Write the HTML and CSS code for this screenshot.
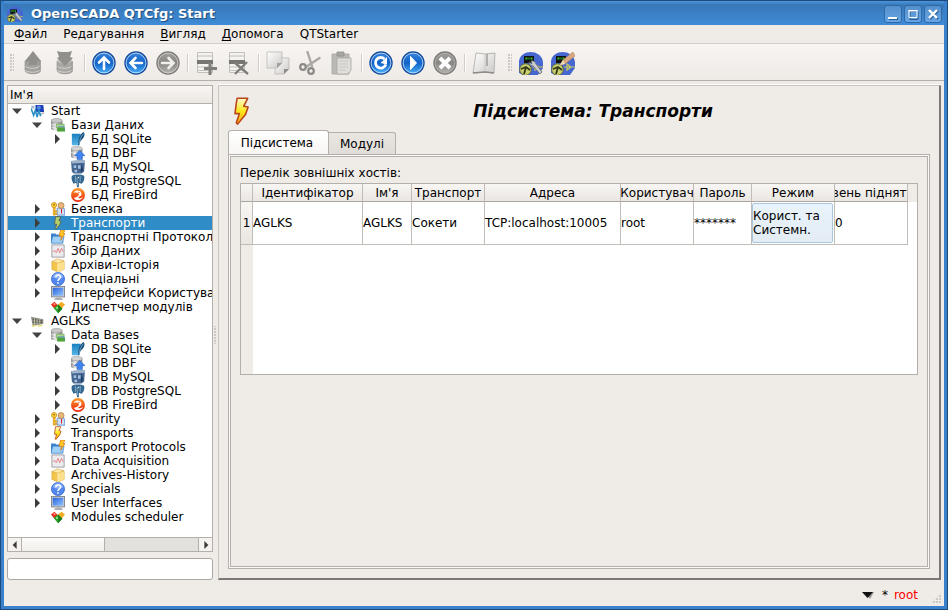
FILE: index.html
```html
<!DOCTYPE html>
<html lang="uk">
<head>
    <meta charset="UTF-8">
    <meta name="viewport" content="width=device-width, initial-scale=1.0">
    <title>OpenSCADA QTCfg: Start</title>
    <link rel="stylesheet" href="styles.css">
</head>
<body>
    <!-- icon set -->
    <svg class="defs" aria-hidden="true">
        <defs>
            <linearGradient id="gBlue" x1="0" y1="0" x2="0" y2="1"><stop offset="0" stop-color="#3d86dc"/><stop offset=".5" stop-color="#0f62c8"/><stop offset="1" stop-color="#4fb4fb"/></linearGradient>
            <linearGradient id="gGray" x1="0" y1="0" x2="0" y2="1"><stop offset="0" stop-color="#a3a19e"/><stop offset=".5" stop-color="#898784"/><stop offset="1" stop-color="#b8b6b3"/></linearGradient>
            <linearGradient id="gDb" x1="0" y1="0" x2="1" y2="0"><stop offset="0" stop-color="#8b8b8b"/><stop offset=".35" stop-color="#e8e8e8"/><stop offset="1" stop-color="#808080"/></linearGradient>
            <linearGradient id="gPage" x1="0" y1="0" x2="1" y2="1"><stop offset="0" stop-color="#ffffff"/><stop offset="1" stop-color="#cccac7"/></linearGradient>
            <linearGradient id="gBolt" x1="0" y1="0" x2="0" y2="1"><stop offset="0" stop-color="#fffbd0"/><stop offset=".5" stop-color="#ffe818"/><stop offset="1" stop-color="#f8a010"/></linearGradient>
            <linearGradient id="gSky" x1="0" y1="0" x2="1" y2="1"><stop offset="0" stop-color="#2c62dc"/><stop offset="1" stop-color="#8fc4ff"/></linearGradient>
            <linearGradient id="gSqlite" x1="0" y1="0" x2="0" y2="1"><stop offset="0" stop-color="#1a7fc0"/><stop offset="1" stop-color="#58b4e4"/></linearGradient>
            <linearGradient id="gFire" x1="0" y1="0" x2="0" y2="1"><stop offset="0" stop-color="#ff9a2a"/><stop offset="1" stop-color="#e8220c"/></linearGradient>
        </defs>

        <symbol id="t-load" viewBox="0 0 24 24">
            <path d="M6 9v11c0 4 14 4 14 0V9z" fill="#b3b1ae"/>
            <path d="M4 10v9c0 5 15 5 15 0v-9z" fill="#a3a19e" stroke="#8d8b88" stroke-width=".6"/>
            <path d="M4.500 15c1 3 13 3 14 0M4.500 19c1 3 13 3 14 0" fill="none" stroke="#d4d2cf" stroke-width="1"/>
            <path d="M12 0l8 10h-4v4H8v-4H4z" fill="#92908d"/>
        </symbol>
        <symbol id="t-save" viewBox="0 0 24 24">
            <path d="M6 10v10c0 4 14 4 14 0V10z" fill="#b3b1ae"/>
            <path d="M4 10v9c0 5 15 5 15 0v-9z" fill="#a9a7a4" stroke="#8d8b88" stroke-width=".6"/>
            <ellipse cx="11.500" cy="10" rx="7.500" ry="2.500" fill="#c4c2bf"/>
            <path d="M4.500 15c1 3 13 3 14 0M4.500 19c1 3 13 3 14 0" fill="none" stroke="#d4d2cf" stroke-width="1"/>
            <path d="M4 0l4 1h7l4-1-2 6 3 1-8 8-8-8 2-1z" fill="#92908d"/>
        </symbol>
        <symbol id="t-up" viewBox="0 0 24 24">
            <circle cx="12" cy="12" r="11" fill="url(#gBlue)" stroke="#134a9c" stroke-width="1.400"/><circle cx="12" cy="12" r="9.900" fill="none" stroke="#cfe5fb" stroke-width=".8"/>
            <path d="M12 18V7M7 11.500l5-5 5 5" fill="none" stroke="#fff" stroke-width="2.600" stroke-linecap="round"/>
        </symbol>
        <symbol id="t-back" viewBox="0 0 24 24">
            <circle cx="12" cy="12" r="11" fill="url(#gBlue)" stroke="#134a9c" stroke-width="1.400"/><circle cx="12" cy="12" r="9.900" fill="none" stroke="#cfe5fb" stroke-width=".8"/>
            <path d="M18 12H7M11.500 7l-5 5 5 5" fill="none" stroke="#fff" stroke-width="2.600" stroke-linecap="round"/>
        </symbol>
        <symbol id="t-forward" viewBox="0 0 24 24">
            <circle cx="12" cy="12" r="11" fill="url(#gGray)" stroke="#7d7b78" stroke-width="1.400"/><circle cx="12" cy="12" r="9.900" fill="none" stroke="#d4d2cf" stroke-width=".8"/>
            <path d="M6 12h11M12.500 7l5 5-5 5" fill="none" stroke="#f1efec" stroke-width="2.600" stroke-linecap="round"/>
        </symbol>
        <symbol id="t-add" viewBox="0 0 24 24">
            <path d="M2.500 1.500h15v20h-15z" fill="#f5f3f0" stroke="#c2c0bd"/>
            <path d="M3 5h14M3 16h14M3 19.500h14" stroke="#c2c0bd"/>
            <path d="M2 9h16v4H2z" fill="#777572"/>
            <path d="M15 11v13M9 17.500h13" stroke="#807e7b" stroke-width="3"/>
        </symbol>
        <symbol id="t-del" viewBox="0 0 24 24">
            <path d="M2.500 1.500h15v20h-15z" fill="#f5f3f0" stroke="#c2c0bd"/>
            <path d="M3 5h14M3 16h14M3 19.500h14" stroke="#c2c0bd"/>
            <path d="M2 9h16v4H2z" fill="#777572"/>
            <path d="M7 11l14 12M20 11L8 23" stroke="#807e7b" stroke-width="2.400"/>
        </symbol>
        <symbol id="t-copy" viewBox="0 0 24 24">
            <path d="M9 7h14v11l-5 5H9z" fill="url(#gPage)" stroke="#b9b7b4" stroke-width=".8"/><path d="M23 18h-5v5z" fill="#8f8d8a"/>
            <path d="M1 1h15v11l-5 5H1z" fill="url(#gPage)" stroke="#b9b7b4" stroke-width=".8"/><path d="M16 12h-5v5z" fill="#a19f9c"/>
        </symbol>
        <symbol id="t-cut" viewBox="0 0 24 24">
            <path d="M9.500 1l4.500 14M21.500 7L8 16" stroke="#aaa8a5" stroke-width="2.400" stroke-linecap="round"/>
            <circle cx="5" cy="16" r="2.800" fill="none" stroke="#8b8986" stroke-width="2.200"/>
            <circle cx="13" cy="20" r="2.800" fill="none" stroke="#8b8986" stroke-width="2.200"/>
        </symbol>
        <symbol id="t-paste" viewBox="0 0 24 24">
            <path d="M2 3h17v20H2z" fill="#bbb9b6" stroke="#a5a3a0" stroke-width=".8"/><path d="M7 1h7v4H7z" fill="#a9a7a4" stroke="#8f8d8a" stroke-width=".8"/>
            <path d="M7 7h14v12l-3 4H7z" fill="#e0deda" stroke="#a5a3a0" stroke-width=".8"/><path d="M9 10h9M9 13h9M9 16h9M9 19h6" stroke="#c8c6c3"/>
        </symbol>
        <symbol id="t-refresh" viewBox="0 0 24 24">
            <circle cx="12" cy="12" r="11" fill="url(#gBlue)" stroke="#134a9c" stroke-width="1.400"/><circle cx="12" cy="12" r="9.900" fill="none" stroke="#cfe5fb" stroke-width=".8"/>
            <path d="M15.500 8a5.300 5.300 0 1 0 1.300 5.500" fill="none" stroke="#fff" stroke-width="2.800"/><path d="M11.500 12l6.500-6v7.500z" fill="#fff"/>
        </symbol>
        <symbol id="t-start" viewBox="0 0 24 24">
            <circle cx="12" cy="12" r="11" fill="url(#gBlue)" stroke="#134a9c" stroke-width="1.400"/><circle cx="12" cy="12" r="9.900" fill="none" stroke="#cfe5fb" stroke-width=".8"/>
            <path d="M9.500 5.500l6 6.500-6 6.500z" fill="#fff" stroke="#fff" stroke-linejoin="round"/>
        </symbol>
        <symbol id="t-stop" viewBox="0 0 24 24">
            <circle cx="12" cy="12" r="11" fill="url(#gGray)" stroke="#7d7b78" stroke-width="1.400"/><circle cx="12" cy="12" r="9.900" fill="none" stroke="#b4b2af" stroke-width=".8"/>
            <path d="M7 7l10 10M17 7L7 17" stroke="#fff" stroke-width="4"/>
        </symbol>
        <symbol id="t-manual" viewBox="0 0 24 24">
            <path d="M4 2l9 1 10-1-1 20-9-1-12 1z" fill="url(#gPage)" stroke="#a9a7a4" stroke-width=".8"/>
            <path d="M13 3v18" stroke="#c8c6c3"/><path d="M15 3v12" stroke="#8d8b88" stroke-width="1.200"/><path d="M1 22l12-1 9 1" fill="none" stroke="#8d8b88" stroke-width="1.400"/>
        </symbol>
        <symbol id="t-scada" viewBox="0 0 24 24">
            <path d="M0 22V10C2-2 22-2 24 11v6l-5 7H4z" fill="#4667d2"/>
            <path d="M5 5h10v7H5z" fill="#111"/><path d="M6.500 7.500h2m1 0h1m1 0h2" stroke="#2cc52c" stroke-width="2"/>
            <path d="M13 16h11M16 13v6l4-3z" stroke="#c8c860" stroke-width="1.200" fill="none"/>
            <circle cx="6.500" cy="18.500" r="5.800" fill="#c8cf6c" stroke="#5f6630"/><path d="M2 18l5-2 4 3M7 16l-2 7" stroke="#333a18" stroke-width="1.800" fill="none"/>
        </symbol>
        <symbol id="t-cfg" viewBox="0 0 24 24">
            <use href="#t-scada"/>
            <path d="M12 10a4 4 0 0 1 5 3l6 8-2 2-7-8a4 4 0 0 1-4-4l3 2z" fill="#c9cdd2" stroke="#5d636b" stroke-width=".8"/>
        </symbol>
        <symbol id="t-vision" viewBox="0 0 24 24">
            <use href="#t-scada"/>
            <path d="M9 14l3-5L22 1l2 4-10 8z" fill="#d9a880" stroke="#b08460" stroke-width=".6"/><path d="M9 14l3-5 2 4z" fill="#f0dcb8"/>
        </symbol>

        <symbol id="i-start" viewBox="0 0 16 16">
            <path d="M5 1h9l1 8H6z" fill="#1b3fb4"/><path d="M7 2h4v4H7z" fill="#5f86e8"/><path d="M9 11l6-2v2l-5 2z" fill="#b9b9c8"/>
            <path d="M0 5l3 8 2-6 2 8 2-8 2 7" fill="none" stroke="#2a8fc4" stroke-width="1.800"/><path d="M0 2h4v3H1z" fill="#a8b4d4"/>
        </symbol>
        <symbol id="i-aglks" viewBox="0 0 16 16">
            <path d="M0 3l14 3v5L2 14z" fill="#8d8d82"/><path d="M2 6l11 2M2 9l11 1" stroke="#55554c" stroke-width="1.200"/><path d="M4 5v7M7 6v6M10 6v5" stroke="#c8c8b8"/>
            <path d="M1 14l5-1M8 14l5-1" stroke="#e8e070" stroke-width="1.600"/>
        </symbol>
        <symbol id="i-db" viewBox="0 0 16 16">
            <path d="M0 3v9c0 3 13 3 13 0V3z" fill="url(#gDb)"/><ellipse cx="6.500" cy="3" rx="6.500" ry="2.500" fill="#c8c8c8" stroke="#888" stroke-width=".6"/>
            <path d="M0 7c2 2 11 2 13 0M0 10c2 2 11 2 13 0" fill="none" stroke="#f4f4f4" stroke-width=".7"/>
            <path d="M6 7h9v4H6z" fill="#a8d890" stroke="#5c9040" stroke-width=".6"/><path d="M7 11h9v4.500H7z" fill="#4fa438"/><path d="M8 10h7v3" stroke="#5f8fd0" fill="none"/>
        </symbol>
        <symbol id="i-sqlite" viewBox="0 0 16 16">
            <path d="M1 2h10l-1 13H1z" fill="url(#gSqlite)"/><path d="M8 15c0-7 2-12 6-15 3 2 1 7-3 10l-2 5z" fill="#17507a"/><path d="M9 14c1-5 2-8 5-12" stroke="#9fd3ee" fill="none" stroke-width=".7"/>
        </symbol>
        <symbol id="i-dbf" viewBox="0 0 16 16">
            <path d="M0 3v9c0 3 13 3 13 0V3z" fill="url(#gDb)"/><ellipse cx="6.500" cy="3" rx="6.500" ry="2.500" fill="#d4d4d4" stroke="#888" stroke-width=".6"/>
            <path d="M0 7c2 2 11 2 13 0" fill="none" stroke="#fff" stroke-width=".7"/><path d="M10 5l6 6h-3v4.500H7V11H4z" fill="#3f84f0" stroke="#1d54b8" stroke-width=".6"/>
        </symbol>
        <symbol id="i-mysql" viewBox="0 0 16 16">
            <path d="M0 1l16-1-1 13-3 2.500H3L1 13z" fill="#44658f"/><path d="M0 1l16-1v3L1 4z" fill="#9db4cc"/>
            <path d="M3 6h3v3H3zm5 0h3v4H8zm-4 5h3v3H4z" fill="#a4c0e0"/><path d="M12 4l2 8-3 2z" fill="#203c68"/>
        </symbol>
        <symbol id="i-pgsql" viewBox="0 0 16 16">
            <path d="M1 2c3-2 11-2 14 0 1 4-1 8-3 9l-3-1v5H7l-1-5-3 1C1 8 0 5 1 2z" fill="#34678f"/>
            <path d="M5 2v7M10.500 2v7M7 4c0 3 0 5 .500 9" stroke="#a4c4dc" stroke-width=".8" fill="none"/><circle cx="8.500" cy="4" r=".8" fill="#fff"/>
        </symbol>
        <symbol id="i-fire" viewBox="0 0 16 16">
            <circle cx="8" cy="8" r="8" fill="url(#gFire)"/><path d="M3 5c4-4 9-2 9 2 0 2-3 3-4 4 2 1 4 1 6-1-2 5-9 5-11 1 3 0 6-2 6-4S6 5 3 5z" fill="#fff"/><circle cx="9" cy="5" r=".8" fill="#f06010"/>
        </symbol>
        <symbol id="i-sec" viewBox="0 0 16 16">
            <path d="M7 7h8l1 8H7z" fill="#cfe0fa" stroke="#3f74c8" stroke-width=".8"/><path d="M12 8v5" stroke="#d82020" stroke-width="1.200"/><circle cx="11.500" cy="4" r="3.400" fill="#e8b878" stroke="#a87848" stroke-width=".8"/>
            <circle cx="3.500" cy="3.500" r="3" fill="#ffd23c" stroke="#c08818" stroke-width=".8"/><circle cx="3.500" cy="3" r="1" fill="#a06c08"/><path d="M2.500 6.500h2.300V15H2.500zM5 10h2v1.500H5zm0 3h2v1.500H5z" fill="#f8b820" stroke="#c08818" stroke-width=".5"/>
        </symbol>
        <symbol id="i-bolt" viewBox="0 0 32 32">
            <path d="M10.500 1.500h12L18 10.500l5 1L20 20 11 31l-1.500-1.500L13 19H8L9.500 7z" fill="url(#gBolt)" stroke="#b84418" stroke-width="1.800" stroke-linejoin="round"/>
        </symbol>
        <symbol id="i-boltsel" viewBox="0 0 32 32">
            <path d="M10.500 1.500h12L18 10.500l5 1L20 20 11 31l-1.500-1.500L13 19H8L9.500 7z" fill="#b4cf68" stroke="#565c58" stroke-width="2" stroke-linejoin="round"/>
        </symbol>
        <symbol id="i-proto" viewBox="0 0 16 16">
            <path d="M0 4h5l1 1h8v10H0z" fill="#3d84cc"/><path d="M2 7h13l-2 8H0z" fill="#9fd0f8" stroke="#2f74bc" stroke-width=".6"/><path d="M11 0h5l-2 4h2l-5 8 1-5h-3z" fill="#ffc820" stroke="#d06810" stroke-width=".7"/>
        </symbol>
        <symbol id="i-daq" viewBox="0 0 16 16">
            <path d="M1 1h14v14H1z" fill="#ecebf0" stroke="#97979c"/><path d="M2 9l2-2 2 3 2-5 2 5 2-5 2 4" fill="none" stroke="#e07070" stroke-width=".9"/>
        </symbol>
        <symbol id="i-arch" viewBox="0 0 16 16">
            <path d="M1 4v9l7 3 7-3V4z" fill="#f4c64c" stroke="#d8a440" stroke-width=".7"/><path d="M1 4l6-3 8 2-7 3z" fill="#ffe9a4" stroke="#d8a440" stroke-width=".7"/><path d="M8 6v10l7-3V4z" fill="#fbe08c"/><path d="M8 6v10" stroke="#fff4c8"/>
        </symbol>
        <symbol id="i-spec" viewBox="0 0 16 16">
            <circle cx="8" cy="8" r="7.500" fill="#5487ee" stroke="#2f62d0" stroke-width=".8"/><path d="M2 6c1-6 11-6 12 0-4 2-8 2-12 0z" fill="#8fb4fa"/>
            <path d="M5.500 6c0-3.500 5.300-3.500 5.300-.3C10.800 8 8 7.800 8 10.200M8 11.600v1.800" fill="none" stroke="#fff" stroke-width="1.800"/>
        </symbol>
        <symbol id="i-ui" viewBox="0 0 16 16">
            <path d="M0 0h16v13H0z" fill="#7f8388"/><path d="M1 1h14v11H1z" fill="#c8ccd4"/><path d="M2 2h12v9H2z" fill="url(#gSky)"/><path d="M6 13h5v1h2v2H4v-2h2z" fill="#a8acb0"/>
        </symbol>
        <symbol id="i-mod" viewBox="0 0 16 16">
            <path d="M0 5l4-3 4 4-4 4z" fill="#e82c1c"/><path d="M8 5l4-3 4 3-4 5z" fill="#f4ac24"/><path d="M3 9l5-4 5 5-5 5z" fill="#2ca42c"/><path d="M8 5l5 5-5 5z" fill="#1c7c1c"/><circle cx="4" cy="4.500" r="1.200" fill="#ff9c90"/><circle cx="7" cy="9" r="1.200" fill="#98e490"/>
        </symbol>
        <symbol id="a-down" viewBox="0 0 10 10"><path d="M0 2.500h10L5 8z" fill="#444"/></symbol>
        <symbol id="a-right" viewBox="0 0 10 10"><path d="M3 0l5 5-5 5z" fill="#3c3c3c"/></symbol>
        <symbol id="a-left" viewBox="0 0 10 10"><path d="M7 0L2 5l5 5z" fill="#3c3c3c"/></symbol>
    </svg>

    <div class="window">
        <header class="titlebar">
            <svg class="app-icon"><use href="#t-cfg"/></svg>
            <h1 class="caption">OpenSCADA QTCfg: Start</h1>
            <button class="win-btn" type="button" aria-label="Minimize"><svg viewBox="0 0 16 16"><path d="M4 12h9v2H4z" fill="#255a94"/><path d="M3 11h9v2H3z" fill="#fff"/></svg></button>
            <button class="win-btn" type="button" aria-label="Maximize"><svg viewBox="0 0 16 16"><path d="M5 5.500h8v8H5z" fill="none" stroke="#255a94"/><path d="M4 4.500h8v7H4z" fill="none" stroke="#fff"/><path d="M3.500 4h9v1.500h-9z" fill="#fff"/></svg></button>
            <button class="win-btn" type="button" aria-label="Close"><svg viewBox="0 0 16 16"><path d="M5 5l8 8M13 5l-8 8" stroke="#255a94" stroke-width="2"/><path d="M4 4l8 8M12 4l-8 8" stroke="#fff" stroke-width="2.400"/></svg></button>
        </header>

        <nav class="menubar">
            <button type="button"><u>Ф</u>айл</button>
            <button type="button">Редагування</button>
            <button type="button"><u>В</u>игляд</button>
            <button type="button"><u>Д</u>опомога</button>
            <button type="button">QTStarter</button>
        </nav>

        <div class="toolbar">
            <span class="handle"></span>
            <button type="button" aria-label="Завантажити з БД"><svg><use href="#t-load"/></svg></button>
            <button type="button" aria-label="Зберегти в БД"><svg><use href="#t-save"/></svg></button>
            <span class="sep"></span>
            <button type="button" aria-label="Вгору"><svg><use href="#t-up"/></svg></button>
            <button type="button" aria-label="Назад"><svg><use href="#t-back"/></svg></button>
            <button type="button" aria-label="Вперед"><svg><use href="#t-forward"/></svg></button>
            <span class="sep"></span>
            <button type="button" aria-label="Додати"><svg><use href="#t-add"/></svg></button>
            <button type="button" aria-label="Видалити"><svg><use href="#t-del"/></svg></button>
            <span class="sep"></span>
            <button type="button" aria-label="Копіювати"><svg><use href="#t-copy"/></svg></button>
            <button type="button" aria-label="Вирізати"><svg><use href="#t-cut"/></svg></button>
            <button type="button" aria-label="Вставити"><svg><use href="#t-paste"/></svg></button>
            <span class="sep"></span>
            <button type="button" aria-label="Оновити"><svg><use href="#t-refresh"/></svg></button>
            <button type="button" aria-label="Запустити"><svg><use href="#t-start"/></svg></button>
            <button type="button" aria-label="Зупинити"><svg><use href="#t-stop"/></svg></button>
            <span class="sep"></span>
            <button type="button" aria-label="Посібник"><svg><use href="#t-manual"/></svg></button>
            <span class="handle"></span>
            <button type="button" aria-label="Конфігуратор"><svg><use href="#t-cfg"/></svg></button>
            <button type="button" aria-label="Візуалізація"><svg><use href="#t-vision"/></svg></button>
        </div>

        <div class="content">
            <aside class="sidebar">
                <div class="tree">
                    <div class="tree-head">Ім'я</div>
                    <div class="tree-body">
                        <ul>
                            <li>
                                <div class="row"><button type="button" class="exp" aria-label="Згорнути"><svg><use href="#a-down"/></svg></button><svg class="ico"><use href="#i-start"/></svg>Start</div>
                                <ul>
                                    <li>
                                        <div class="row"><button type="button" class="exp" aria-label="Згорнути"><svg><use href="#a-down"/></svg></button><svg class="ico"><use href="#i-db"/></svg>Бази Даних</div>
                                        <ul>
                                            <li class="row"><button type="button" class="exp" aria-label="Розгорнути"><svg><use href="#a-right"/></svg></button><svg class="ico"><use href="#i-sqlite"/></svg>БД SQLite</li>
                                            <li class="row"><span class="exp"></span><svg class="ico"><use href="#i-dbf"/></svg>БД DBF</li>
                                            <li class="row"><span class="exp"></span><svg class="ico"><use href="#i-mysql"/></svg>БД MySQL</li>
                                            <li class="row"><span class="exp"></span><svg class="ico"><use href="#i-pgsql"/></svg>БД PostgreSQL</li>
                                            <li class="row"><span class="exp"></span><svg class="ico"><use href="#i-fire"/></svg>БД FireBird</li>
                                        </ul>
                                    </li>
                                    <li class="row"><button type="button" class="exp" aria-label="Розгорнути"><svg><use href="#a-right"/></svg></button><svg class="ico"><use href="#i-sec"/></svg>Безпека</li>
                                    <li class="row selected"><button type="button" class="exp" aria-label="Розгорнути"><svg><use href="#a-right"/></svg></button><svg class="ico"><use href="#i-boltsel"/></svg>Транспорти</li>
                                    <li class="row"><button type="button" class="exp" aria-label="Розгорнути"><svg><use href="#a-right"/></svg></button><svg class="ico"><use href="#i-proto"/></svg>Транспортні Протоколи</li>
                                    <li class="row"><button type="button" class="exp" aria-label="Розгорнути"><svg><use href="#a-right"/></svg></button><svg class="ico"><use href="#i-daq"/></svg>Збір Даних</li>
                                    <li class="row"><button type="button" class="exp" aria-label="Розгорнути"><svg><use href="#a-right"/></svg></button><svg class="ico"><use href="#i-arch"/></svg>Архіви-Історія</li>
                                    <li class="row"><button type="button" class="exp" aria-label="Розгорнути"><svg><use href="#a-right"/></svg></button><svg class="ico"><use href="#i-spec"/></svg>Спеціальні</li>
                                    <li class="row"><button type="button" class="exp" aria-label="Розгорнути"><svg><use href="#a-right"/></svg></button><svg class="ico"><use href="#i-ui"/></svg>Інтерфейси Користувача</li>
                                    <li class="row"><span class="exp"></span><svg class="ico"><use href="#i-mod"/></svg>Диспетчер модулів</li>
                                </ul>
                            </li>
                            <li>
                                <div class="row"><button type="button" class="exp" aria-label="Згорнути"><svg><use href="#a-down"/></svg></button><svg class="ico"><use href="#i-aglks"/></svg>AGLKS</div>
                                <ul>
                                    <li>
                                        <div class="row"><button type="button" class="exp" aria-label="Згорнути"><svg><use href="#a-down"/></svg></button><svg class="ico"><use href="#i-db"/></svg>Data Bases</div>
                                        <ul>
                                            <li class="row"><button type="button" class="exp" aria-label="Розгорнути"><svg><use href="#a-right"/></svg></button><svg class="ico"><use href="#i-sqlite"/></svg>DB SQLite</li>
                                            <li class="row"><span class="exp"></span><svg class="ico"><use href="#i-dbf"/></svg>DB DBF</li>
                                            <li class="row"><button type="button" class="exp" aria-label="Розгорнути"><svg><use href="#a-right"/></svg></button><svg class="ico"><use href="#i-mysql"/></svg>DB MySQL</li>
                                            <li class="row"><button type="button" class="exp" aria-label="Розгорнути"><svg><use href="#a-right"/></svg></button><svg class="ico"><use href="#i-pgsql"/></svg>DB PostgreSQL</li>
                                            <li class="row"><button type="button" class="exp" aria-label="Розгорнути"><svg><use href="#a-right"/></svg></button><svg class="ico"><use href="#i-fire"/></svg>DB FireBird</li>
                                        </ul>
                                    </li>
                                    <li class="row"><button type="button" class="exp" aria-label="Розгорнути"><svg><use href="#a-right"/></svg></button><svg class="ico"><use href="#i-sec"/></svg>Security</li>
                                    <li class="row"><button type="button" class="exp" aria-label="Розгорнути"><svg><use href="#a-right"/></svg></button><svg class="ico"><use href="#i-bolt"/></svg>Transports</li>
                                    <li class="row"><button type="button" class="exp" aria-label="Розгорнути"><svg><use href="#a-right"/></svg></button><svg class="ico"><use href="#i-proto"/></svg>Transport Protocols</li>
                                    <li class="row"><button type="button" class="exp" aria-label="Розгорнути"><svg><use href="#a-right"/></svg></button><svg class="ico"><use href="#i-daq"/></svg>Data Acquisition</li>
                                    <li class="row"><button type="button" class="exp" aria-label="Розгорнути"><svg><use href="#a-right"/></svg></button><svg class="ico"><use href="#i-arch"/></svg>Archives-History</li>
                                    <li class="row"><button type="button" class="exp" aria-label="Розгорнути"><svg><use href="#a-right"/></svg></button><svg class="ico"><use href="#i-spec"/></svg>Specials</li>
                                    <li class="row"><button type="button" class="exp" aria-label="Розгорнути"><svg><use href="#a-right"/></svg></button><svg class="ico"><use href="#i-ui"/></svg>User Interfaces</li>
                                    <li class="row"><span class="exp"></span><svg class="ico"><use href="#i-mod"/></svg>Modules scheduler</li>
                                </ul>
                            </li>
                        </ul>
                    </div>
                    <div class="scrollbar">
                        <button type="button" aria-label="Вліво"><svg><use href="#a-left"/></svg></button>
                        <div class="track"><div class="thumb"></div></div>
                        <button type="button" aria-label="Вправо"><svg><use href="#a-right"/></svg></button>
                    </div>
                </div>
                <input class="search" type="text" aria-label="Пошук">
            </aside>

            <div class="splitter"></div>

            <main class="page">
                <div class="page-head">
                    <svg class="page-icon"><use href="#i-bolt"/></svg>
                    <h2>Підсистема: Транспорти</h2>
                </div>
                <div class="tabs" role="tablist">
                    <button type="button" class="tab active" role="tab" aria-selected="true">Підсистема</button>
                    <button type="button" class="tab" role="tab" aria-selected="false">Модулі</button>
                </div>
                <div class="pane">
                    <div class="pane-in">
                        <div class="label" id="hostsLabel">Перелік зовнішніх хостів:</div>
                        <div class="grid">
                            <table aria-labelledby="hostsLabel">
                                <colgroup>
                                    <col class="c-num"><col class="c-id"><col class="c-name"><col class="c-tr"><col class="c-addr"><col class="c-user"><col class="c-pass"><col class="c-mode"><col class="c-lvl">
                                </colgroup>
                                <thead>
                                    <tr>
                                        <th></th>
                                        <th><div>Ідентифікатор</div></th>
                                        <th><div>Ім'я</div></th>
                                        <th><div>Транспорт</div></th>
                                        <th><div>Адреса</div></th>
                                        <th><div>Користувач</div></th>
                                        <th><div>Пароль</div></th>
                                        <th><div>Режим</div></th>
                                        <th><div>Рівень підняття</div></th>
                                    </tr>
                                </thead>
                                <tbody>
                                    <tr>
                                        <th>1</th>
                                        <td>AGLKS</td>
                                        <td>AGLKS</td>
                                        <td>Сокети</td>
                                        <td>TCP:localhost:10005</td>
                                        <td>root</td>
                                        <td>*******</td>
                                        <td class="current"><div>Корист. та Системн.</div></td>
                                        <td>0</td>
                                    </tr>
                                </tbody>
                            </table>
                            <div class="grid-rest"></div>
                        </div>
                    </div>
                </div>
            </main>
        </div>

        <footer class="statusbar">
            <svg class="status-arrow" viewBox="0 0 12 8"><path d="M2 1h10L8 8z" fill="#9a9894"/><path d="M0 1h11L5.500 7z" fill="#111"/></svg>
            <span>*</span>
            <span class="user">root</span>
            <span class="grip"></span>
        </footer>
    </div>
</body>
</html>
```
FILE: styles.css
```css
* {
    box-sizing: border-box;
}

body {
    margin: 0;
    background: #efebe7;
    color: #000;
    font-family: "DejaVu Sans", Verdana, sans-serif;
    font-size: 12px;
    line-height: 14px;
}

button {
    margin: 0;
    padding: 0;
    border: none;
    background: none;
    color: inherit;
    font: inherit;
}

ul {
    margin: 0;
    padding: 0;
    list-style: none;
}

.defs {
    position: absolute;
    width: 0;
    height: 0;
}

.window {
    display: flex;
    flex-direction: column;
    min-height: 100vh;
    border: 4px solid #3a80ca;
    border-top: none;
    outline: 1px solid #1c4a7c;
    outline-offset: -1px;
}

/* title bar */
.titlebar {
    display: flex;
    align-items: center;
    height: 25px;
    padding: 2px 2px 0 3px;
    gap: 2px;
    background: linear-gradient(#1d4570 0, #1d4570 1px, #4b95dc 1px, #3878b8 5px, #3f8cd8 25px);
}

.app-icon {
    width: 16px;
    height: 16px;
}

.caption {
    flex: 1;
    margin: 0 0 0 6px;
    color: #fff;
    font-size: 13px;
    font-weight: bold;
    text-shadow: 1px 1px 1px #1c4a7c;
}

.win-btn {
    width: 18px;
    height: 18px;
    border: 1px solid #2e69a8;
    border-radius: 3px;
    background: linear-gradient(#5590cc, #66a4e4);
}

.win-btn svg {
    display: block;
    width: 16px;
    height: 16px;
}

/* menu and tools */
.menubar {
    display: flex;
    gap: 16px;
    height: 19px;
    padding: 0 10px;
    border-bottom: 1px solid #d2cecb;
}

.menubar u {
    text-underline-offset: 2px;
}

.toolbar {
    display: flex;
    align-items: center;
    height: 37px;
    padding-top: 2px;
    border-bottom: 1px solid #b5b0ac;
    background: linear-gradient(#f8f5f2, #eeeae6);
}

.toolbar button {
    width: 32px;
    height: 32px;
    padding: 4px;
}

.toolbar svg {
    display: block;
    width: 24px;
    height: 24px;
}

.sep {
    width: 7px;
    height: 18px;
    background: linear-gradient(#d0ccc8, #d0ccc8) 3px 0 / 1px 100% no-repeat, linear-gradient(#fff, #fff) 4px 0 / 1px 100% no-repeat;
}

.handle {
    width: 13px;
    height: 18px;
    background: radial-gradient(circle at 1px 1px, #ccc8c4 1px, transparent 1px) 0 0 / 3px 3px;
    background-clip: content-box;
    padding: 0 3px 0 5px;
}

button + .handle {
    margin-left: 2px;
}

/* tree */
.content {
    display: flex;
    flex: 1;
    padding: 4px 3px 0;
}

.sidebar {
    display: flex;
    flex-direction: column;
    flex: none;
    width: 206px;
    gap: 6px;
}

.tree {
    display: flex;
    flex-direction: column;
    flex: 1;
    border: 1px solid #b3b0ac;
    background: #fff;
}

.tree-head {
    height: 18px;
    padding: 2px;
    border-bottom: 1px solid #b3b0ac;
    background: linear-gradient(#f8f6f3, #ebe7e3);
}

.tree-body {
    flex: 1;
    overflow: hidden;
}

.tree-body ul ul {
    margin-left: 20px;
}

.row {
    display: flex;
    align-items: center;
    height: 14px;
    white-space: nowrap;
}

.selected {
    margin-left: -20px;
    padding-left: 20px;
    background: #308cc6;
    color: #fff;
}

.exp {
    flex: none;
    width: 20px;
    height: 14px;
    margin-right: 3px;
}

.exp svg {
    display: block;
    width: 10px;
    height: 10px;
    margin-left: 4px;
}

.ico {
    flex: none;
    width: 14px;
    height: 14px;
    margin-right: 6px;
}

.scrollbar {
    display: flex;
    height: 14px;
    border-top: 1px solid #b3b0ac;
    background: #f5f2ef;
}

.scrollbar button {
    width: 13px;
}

.scrollbar button svg {
    display: block;
    width: 8px;
    height: 8px;
    margin: auto;
}

.track {
    flex: 1;
    border: solid #b3b0ac;
    border-width: 0 1px;
    background: #e2e1de;
}

.thumb {
    width: 47%;
    height: 100%;
    border-right: 1px solid #b3b0ac;
    background: linear-gradient(#fdfcfb, #f1eeeb);
}

.search {
    width: 100%;
    height: 22px;
    border: 1px solid #aca9a5;
    border-radius: 3px;
    background: #fff;
    font: inherit;
}

.splitter {
    width: 5px;
    background: radial-gradient(circle at 1px 1px, #ccc8c4 1px, transparent 1px) center / 3px 3px;
    background-clip: content-box;
    padding: 241px 1px 236px;
}

/* page */
.page {
    display: flex;
    flex-direction: column;
    flex: 1;
    min-width: 0;
    padding: 8px 9px 9px;
    border: 1px solid #c9c5c1;
    border-right: 2px solid #7b7875;
    border-bottom: 2px solid #7b7875;
    box-shadow: 0 -1px #fff;
}

.page-head {
    display: flex;
    align-items: center;
    height: 36px;
    padding-bottom: 3px;
}

.page-icon {
    width: 28px;
    height: 28px;
}

.page-head h2 {
    flex: 1;
    margin: 0;
    font-size: 17px;
    font-style: italic;
    line-height: 20px;
    text-align: center;
}

.tabs {
    display: flex;
    align-items: flex-end;
}

.tab {
    height: 22px;
    padding: 0 11px;
    border: 1px solid #b3b0ac;
    border-left: none;
    border-bottom: none;
    border-radius: 0 3px 0 0;
    background: linear-gradient(#e9e5e1, #e0dcd8);
}

.tab.active {
    height: 24px;
    padding: 0 14px 0 11px;
    min-width: 101px;
    border-left: 1px solid #b3b0ac;
    border-radius: 3px 3px 0 0;
    background: linear-gradient(#fff, #f8f6f4);
}

.pane {
    display: flex;
    flex: 1;
    padding: 1px;
    border: 1px solid #b3b0ac;
    background: #fbfaf9;
}

.pane-in {
    flex: 1;
    min-width: 0;
    padding: 9px;
    border: 1px solid #b3b0ac;
    background: #efebe7;
}

.label {
    margin-bottom: 3px;
}

.grid {
    height: 192px;
    display: flex;
    flex-direction: column;
    border: 1px solid #b3b0ac;
    background: linear-gradient(#efebe7, #efebe7) 0 0 / 100% 18px no-repeat #fff;
    overflow: hidden;
}

.grid table {
    width: 667px;
    border-collapse: separate;
    border-spacing: 0;
    table-layout: fixed;
}

.c-num { width: 12px; }
.c-id { width: 110px; }
.c-name { width: 49px; }
.c-tr { width: 73px; }
.c-addr { width: 136px; }
.c-user { width: 73px; }
.c-pass { width: 58px; }
.c-mode { width: 83px; }
.c-lvl { width: 73px; }

.grid th,
.grid td {
    padding: 0;
    border-right: 1px solid #c0bcb8;
    border-bottom: 1px solid #c0bcb8;
    font-weight: normal;
    text-align: left;
}

.grid th {
    background: linear-gradient(#f8f6f3, #eae6e2);
}

.grid thead th {
    height: 18px;
    border-bottom-color: #aaa7a3;
}

.grid thead th div {
    display: flex;
    justify-content: center;
    overflow: hidden;
    white-space: nowrap;
}

.grid tbody tr {
    height: 43px;
}

.grid tbody th {
    text-align: center;
}

.current div {
    height: 40px;
    margin: 0 1px 0 0;
    padding-top: 5px;
    border: 1px solid #a9c6dc;
    border-radius: 2px;
    background: linear-gradient(#e8f3fc, #e4ecf3);
}

.grid-rest {
    flex: 1;
    width: 12px;
    background: #efebe7;
}

/* status bar */
.statusbar {
    display: flex;
    align-items: center;
    height: 26px;
    gap: 6px;
    padding-top: 3px;
}

.status-arrow {
    width: 12px;
    height: 8px;
    margin-left: auto;
    margin-right: 2px;
}

.user {
    color: #f00;
}

.grip {
    align-self: flex-end;
    width: 12px;
    height: 12px;
    margin: 0 2px 2px 6px;
    background: radial-gradient(circle at 1px 1px, #ccc8c4 1px, transparent 1px) 0 0 / 3px 3px;
    clip-path: polygon(100% 0, 100% 100%, 0 100%);
}
```
